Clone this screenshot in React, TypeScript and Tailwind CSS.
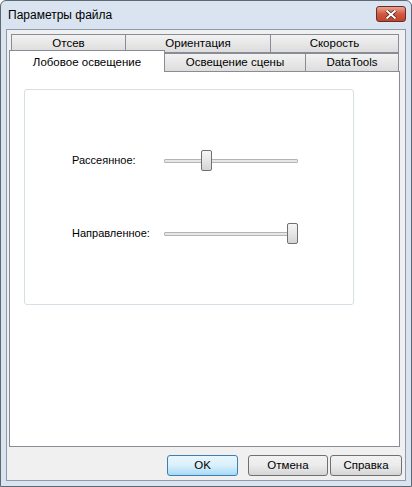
const font = "font-['Liberation_Sans','DejaVu_Sans',sans-serif]"

const topTabs = [
  { label: "Отсев", w: "w-[115px]" },
  { label: "Ориентация", w: "w-[146px]" },
  { label: "Скорость", w: "w-[129px]" },
]

const bottomTabs = [
  { label: "Освещение сцены", w: "w-[142px]" },
  { label: "DataTools", w: "w-[94px]" },
]

function Slider({ pos }: { pos: number }) {
  return (
    <div className="relative h-[21px] w-[134px]">
      <div className="absolute left-0 right-0 top-[9px] h-[4px] border border-[#b4b4b4] bg-[#e6e6e6] rounded-[1px]" />
      <div
        className="absolute top-0 h-[21px] w-[11px] rounded-[2px] border border-[#707070] bg-gradient-to-b from-[#f6f6f6] via-[#e6e6e6] to-[#d4d4d4]"
        style={{ left: pos }}
      />
    </div>
  )
}

function Button({ label, w, primary }: { label: string; w: string; primary?: boolean }) {
  return (
    <div
      className={
        "flex h-[21px] items-center justify-center rounded-[3px] border text-[11.5px] text-black " +
        w +
        (primary
          ? " border-[#3c7fb1] bg-gradient-to-b from-[#eaf6fd] via-[#d9f0fc] to-[#a7d9f5]"
          : " border-[#707070] bg-gradient-to-b from-[#f2f2f2] via-[#ebebeb] to-[#d5d5d5]")
      }
    >
      {label}
    </div>
  )
}

export default function App() {
  return (
    <div className={"flex h-[487px] w-[412px] flex-col rounded-t-[6px] border border-[#5e6873] bg-[#d9e4f0] " + font}>
      {/* Title bar */}
      <div className="flex h-[28px] items-center justify-between pl-[7px] pr-[5px]">
        <span className="text-[12px] text-black">Параметры файла</span>
        <div className="mt-[-2px] flex h-[16px] w-[30px] items-center justify-center rounded-[3px] border border-[#6d2b26] bg-gradient-to-b from-[#e8a493] via-[#d0593f] to-[#c0442c]">
          <svg width="12" height="9" viewBox="0 0 12 9">
            <path d="M1.5 0.5 L10.5 8.5 M10.5 0.5 L1.5 8.5" stroke="#4a1a14" strokeWidth="3.4" />
            <path d="M1.5 0.5 L10.5 8.5 M10.5 0.5 L1.5 8.5" stroke="#ffffff" strokeWidth="2" />
          </svg>
        </div>
      </div>

      {/* Client area */}
      <div className="mx-[5px] mb-[5px] flex flex-1 flex-col border border-[#8e9bab] bg-[#f0f0f0]">
        <div className="ml-[2px] mt-[4px] w-[391px]">
          {/* Top tab row */}
          <div className="flex pl-[2px]">
            {topTabs.map((t, i) => (
              <div
                key={t.label}
                className={
                  "flex h-[19px] items-center justify-center border border-[#898c95] bg-gradient-to-b from-[#f2f2f2] to-[#dcdcdc] text-[11.5px] text-black " +
                  t.w +
                  (i > 0 ? " -ml-px" : "")
                }
              >
                {t.label}
              </div>
            ))}
          </div>
          {/* Bottom tab row */}
          <div className="-mb-px -mt-[3px] flex items-end">
            <div className="relative z-10 flex h-[22px] w-[156px] items-start justify-center border border-b-0 border-[#898c95] bg-white pt-[3px] text-[11.5px] text-black">
              Лобовое освещение
            </div>
            {bottomTabs.map((t) => (
              <div
                key={t.label}
                className={
                  "-ml-px flex h-[19px] items-center justify-center border border-b-0 border-[#898c95] bg-gradient-to-b from-[#f2f2f2] to-[#dcdcdc] text-[11.5px] text-black " +
                  t.w
                }
              >
                {t.label}
              </div>
            ))}
          </div>
          {/* Panel */}
          <div className="relative h-[376px] border border-[#898c95] bg-white pl-[14px] pt-[17px]">
            <div className="flex h-[216px] w-[330px] flex-col gap-[52px] rounded-[3px] border border-[#d5dfe5] pt-[60px]">
              <div className="flex items-center pl-[47px]">
                <span className="w-[92px] text-[11px] text-black">Рассеянное:</span>
                <Slider pos={37} />
              </div>
              <div className="flex items-center pl-[47px]">
                <span className="w-[92px] text-[11px] text-black">Направленное:</span>
                <Slider pos={123} />
              </div>
            </div>
          </div>
        </div>

        {/* Buttons */}
        <div className="mt-[8px] flex justify-end pr-[3px]">
          <Button label="OK" w="w-[71px]" primary />
          <div className="w-[10px]" />
          <Button label="Отмена" w="w-[80px]" />
          <div className="w-[2px]" />
          <Button label="Справка" w="w-[72px]" />
        </div>
      </div>
    </div>
  )
}
